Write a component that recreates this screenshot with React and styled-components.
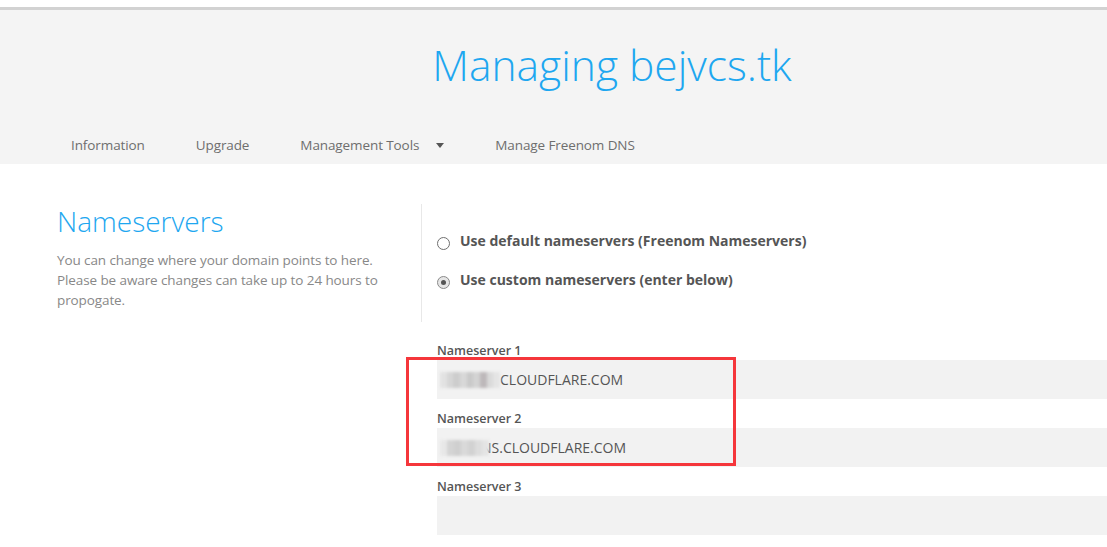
import React from 'react';
import styled, { createGlobalStyle } from 'styled-components';

const GlobalStyle = createGlobalStyle`
  body {
    margin: 0;
    background: #fff;
    font-family: "Open Sans", "Liberation Sans", sans-serif;
  }
`;

const Page = styled.div`
  padding-top: 7px;
  width: 1107px;
  overflow: hidden;
`;

const Header = styled.header`
  background: #f4f4f4;
  border-top: 3px solid #d2d2d2;
  height: 154px;
  display: flex;
  flex-direction: column;
`;

const Title = styled.h1`
  margin: 0;
  padding: 27px 0 0 117px;
  text-align: center;
  font-size: 42.5px;
  font-weight: 300;
  line-height: 56px;
  color: #1ea7f0;
`;

const Nav = styled.nav`
  margin-top: auto;
  display: flex;
  align-items: center;
  gap: 51px;
  padding: 0 0 7px 71px;
  height: 24px;
`;

const NavItem = styled.a`
  display: flex;
  align-items: center;
  font-size: 13.5px;
  letter-spacing: -0.1px;
  color: #6e6e6e;
  text-decoration: none;
`;

const Caret = styled.span`
  margin-left: 17px;
  width: 0;
  height: 0;
  border-left: 4px solid transparent;
  border-right: 4px solid transparent;
  border-top: 5px solid #555;
`;

const Main = styled.main`
  display: grid;
  grid-template-columns: 364px 1fr;
  padding: 40px 0 0 57px;
`;

const Intro = styled.div`
  padding-top: 1px;
`;

const Heading = styled.h2`
  margin: 0;
  font-size: 28px;
  font-weight: 300;
  line-height: 32px;
  color: #1ea7f0;
`;

const Lead = styled.p`
  margin: 13px 0 0;
  width: 340px;
  font-size: 13.5px;
  letter-spacing: -0.1px;
  line-height: 20px;
  color: #888;
`;

const Choices = styled.div`
  border-left: 1px solid #e8e8e8;
  height: 118px;
  padding: 27px 0 0 15px;
  box-sizing: border-box;
  display: flex;
  flex-direction: column;
  gap: 19px;
`;

const Choice = styled.label`
  display: flex;
  align-items: center;
  gap: 10px;
  font-size: 14px;
  font-weight: 700;
  color: #555;
  line-height: 20px;
`;

const Radio = styled.span`
  width: 11px;
  height: 11px;
  margin-top: 5px;
  border-radius: 50%;
  border: 1px solid ${p => (p.$checked ? '#8a8a8a' : '#6f6f6f')};
  background: ${p => (p.$checked ? '#e6e6e6' : '#fff')};
  display: flex;
  align-items: center;
  justify-content: center;
  &::after {
    content: '';
    width: 5px;
    height: 5px;
    border-radius: 50%;
    background: ${p => (p.$checked ? '#555' : 'transparent')};
  }
`;

const Fields = styled.div`
  grid-column: 2;
  position: relative;
  padding: 20px 0 0 16px;
`;

const FieldLabel = styled.div`
  font-size: 12.5px;
  font-weight: 600;
  color: #555;
  line-height: 18px;
`;

const Field = styled.div`
  height: 39px;
  margin-bottom: 11px;
  background: #f2f2f2;
  display: flex;
  align-items: center;
  padding-left: 3px;
  font-size: 14px;
  color: #555;
`;

const Mosaic = styled.span`
  position: relative;
  z-index: 1;
  display: flex;
  width: ${p => p.$w}px;
  margin-right: ${p => p.$overlap || 0}px;
  height: 16px;
  filter: blur(1.5px);
`;

const Tile = styled.span`
  flex: 1;
  background: ${p => p.$c};
`;

const Highlight = styled.div`
  position: absolute;
  left: -15px;
  top: 35px;
  width: 324px;
  height: 103px;
  border: 3px solid #f5363b;
`;

const shades1 = ['#e2e2e2', '#d6d6d6', '#cdcdcd', '#d8d8d8', '#c9c9c9', '#d3d3d3', '#bdb8ba', '#dadada', '#e4e4e4'];
const shades2 = ['#e8e8e8', '#d4d4d4', '#cfcfcf', '#d9d9d9', '#d2d2d2', '#dddddd', '#e4e4e4'];

const Blurred = ({ width, shades, overlap }) => (
  <Mosaic $w={width} $overlap={overlap}>
    {shades.map((c, i) => <Tile key={i} $c={c} />)}
  </Mosaic>
);

export default function App() {
  return (
    <Page>
      <GlobalStyle />
      <Header>
        <Title>Managing bejvcs.tk</Title>
        <Nav>
          <NavItem>Information</NavItem>
          <NavItem>Upgrade</NavItem>
          <NavItem>Management Tools<Caret /></NavItem>
          <NavItem>Manage Freenom DNS</NavItem>
        </Nav>
      </Header>
      <Main>
        <Intro>
          <Heading>Nameservers</Heading>
          <Lead>
            You can change where your domain points to here. Please be aware changes can take up to 24 hours to propogate.
          </Lead>
        </Intro>
        <Choices>
          <Choice><Radio />Use default nameservers (Freenom Nameservers)</Choice>
          <Choice><Radio $checked />Use custom nameservers (enter below)</Choice>
        </Choices>
        <Fields>
          <FieldLabel>Nameserver 1</FieldLabel>
          <Field><Blurred width={60} shades={shades1} />CLOUDFLARE.COM</Field>
          <FieldLabel>Nameserver 2</FieldLabel>
          <Field><Blurred width={49} shades={shades2} overlap={-8} />NS.CLOUDFLARE.COM</Field>
          <FieldLabel>Nameserver 3</FieldLabel>
          <Field />
          <Highlight />
        </Fields>
      </Main>
    </Page>
  );
}
